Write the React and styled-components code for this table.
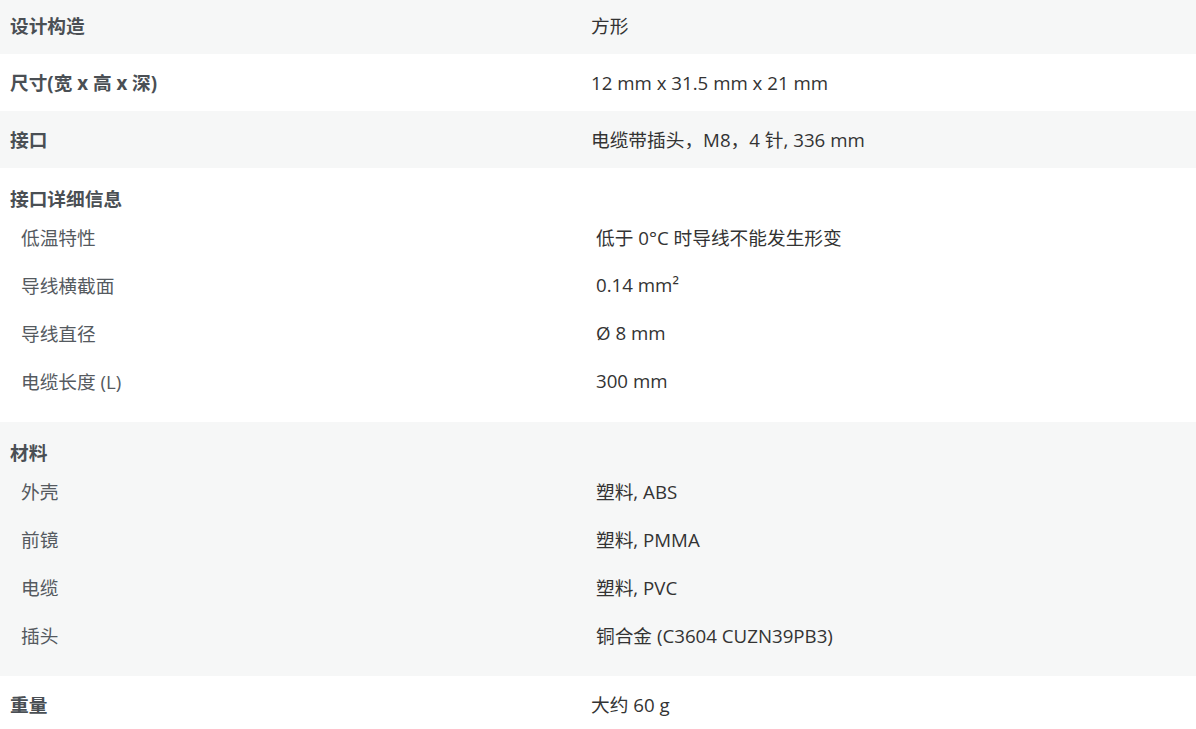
import React from "react";
import styled, { createGlobalStyle } from "styled-components";

const GlobalStyle = createGlobalStyle`
  html, body {
    margin: 0;
    padding: 0;
    background: #fff;
  }
  body {
    font-family: "Open Sans", "Noto Sans CJK SC", sans-serif;
    font-size: 18.7px;
    color: #333;
    overflow: hidden;
  }
`;

const Table = styled.div`
  margin-top: -3px;
  width: 100%;
`;

const Row = styled.div`
  display: grid;
  grid-template-columns: 581px 1fr;
  align-items: center;
  height: 57px;
  background: ${(p) => (p.$shade ? "#f6f7f7" : "#fff")};
`;

const Group = styled.div`
  padding: 17px 0 18px;
  background: ${(p) => (p.$shade ? "#f6f7f7" : "#fff")};
`;

const Label = styled.div`
  padding-left: 10px;
  font-weight: 700;
  color: #4a4f54;
  line-height: 27px;
`;

const Value = styled.div`
  padding-left: 10px;
  color: #333;
  line-height: 27px;
`;

const SubRow = styled.div`
  display: grid;
  grid-template-columns: 586px 1fr;
  align-items: center;
  height: 48px;
`;

const SubLabel = styled.div`
  padding-left: 21px;
  color: #555a5f;
`;

const SubValue = styled.div`
  padding-left: 10px;
  color: #333;
`;

const rows = [
  { type: "row", label: "设计构造", value: "方形" },
  { type: "row", label: "尺寸(宽 x 高 x 深)", value: "12 mm x 31.5 mm x 21 mm" },
  { type: "row", label: "接口", value: "电缆带插头，M8，4 针, 336 mm" },
  {
    type: "group",
    label: "接口详细信息",
    items: [
      ["低温特性", "低于 0°C 时导线不能发生形变"],
      ["导线横截面", "0.14 mm²"],
      ["导线直径", "Ø 8 mm"],
      ["电缆长度 (L)", "300 mm"],
    ],
  },
  {
    type: "group",
    label: "材料",
    items: [
      ["外壳", "塑料, ABS"],
      ["前镜", "塑料, PMMA"],
      ["电缆", "塑料, PVC"],
      ["插头", "铜合金 (C3604 CUZN39PB3)"],
    ],
  },
  { type: "row", label: "重量", value: "大约 60 g" },
];

export default function App() {
  return (
    <>
      <GlobalStyle />
      <Table>
        {rows.map((r, i) => {
          const shade = i % 2 === 0;
          if (r.type === "group") {
            return (
              <Group key={r.label} $shade={shade}>
                <Label>{r.label}</Label>
                {r.items.map(([k, v]) => (
                  <SubRow key={k}>
                    <SubLabel>{k}</SubLabel>
                    <SubValue>{v}</SubValue>
                  </SubRow>
                ))}
              </Group>
            );
          }
          return (
            <Row key={r.label} $shade={shade}>
              <Label>{r.label}</Label>
              <Value>{r.value}</Value>
            </Row>
          );
        })}
      </Table>
    </>
  );
}
